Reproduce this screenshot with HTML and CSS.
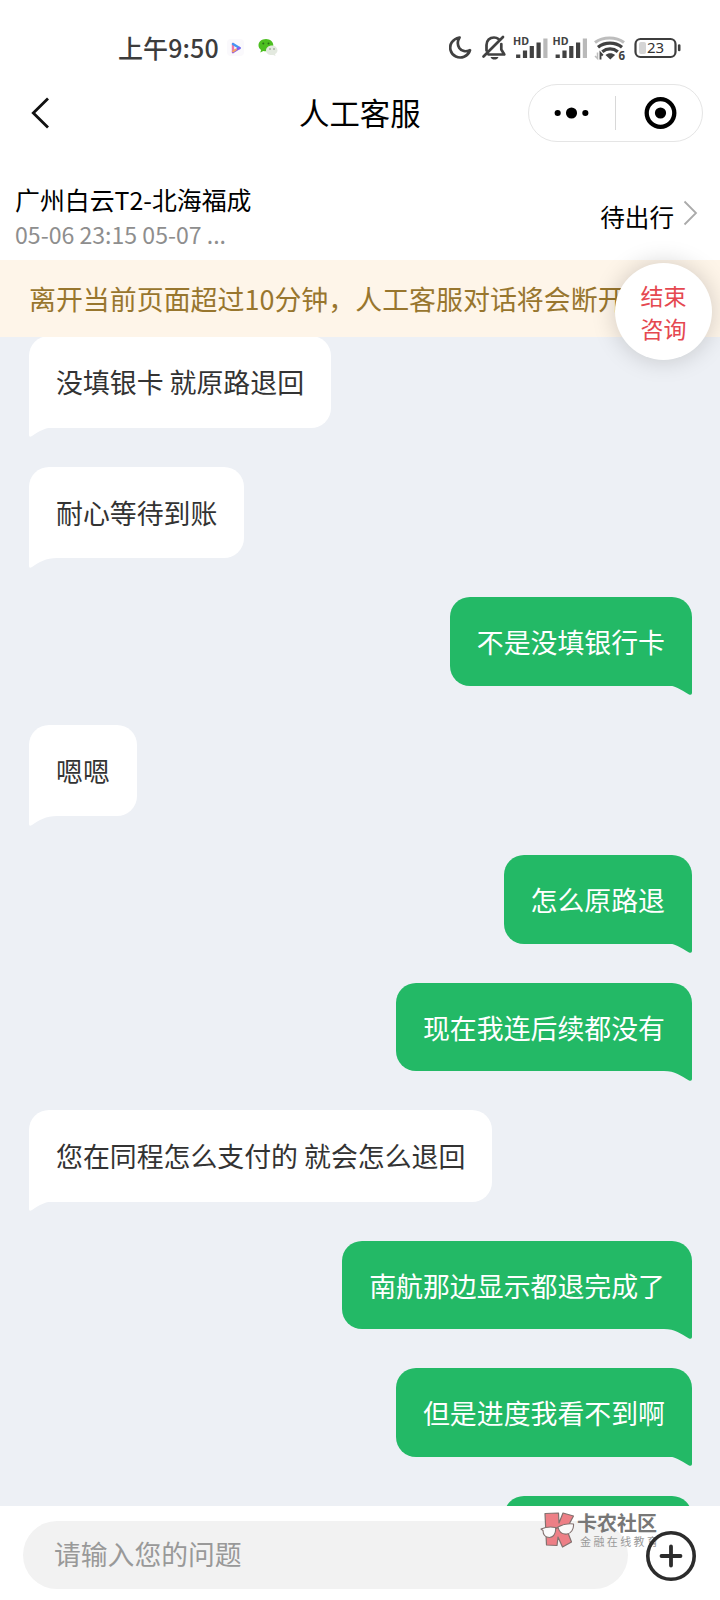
FILE: index.html
```html
<!DOCTYPE html>
<html lang="zh-CN">
<head>
<meta charset="utf-8">
<title>人工客服</title>
<link rel="stylesheet" href="styles.css">
</head>
<body>
<div class="app">
  <div class="status">
    <span class="clock">上午9:50</span>
    <svg class="apps" width="52" height="24" viewBox="0 0 52 24">
      <rect x="1" y="3" width="17" height="17" rx="4" fill="#faf9fc"/>
      <path d="M7 8v8" stroke="#ee79a8" stroke-width="2.400" stroke-linecap="round"/>
      <path d="M7 8l6.500 4" stroke="#4694f5" stroke-width="2.400" stroke-linecap="round"/>
      <path d="M7 16l6.500-4" stroke="#8a5bea" stroke-width="2.400" stroke-linecap="round"/>
      <path d="M7 15.500l3-2" stroke="#f8a45d" stroke-width="2" stroke-linecap="round"/>
      <g transform="translate(3 0)">
      <path d="M37 3c-4.400 0-7.500 2.800-7.500 6.200 0 2 1 3.700 2.600 4.800l-.8 2.500 3-1.500c4.900 1.200 10-1.400 10-5.800C44.300 5.800 41 3 37 3z" fill="#4cbf20"/>
      <circle cx="34.300" cy="7.600" r="1" fill="#286d16"/><circle cx="39.500" cy="7.600" r="1" fill="#286d16"/>
      <path d="M43 9.500c-3.400 0-6 2.200-6 4.900 0 3.200 3.600 5.400 7.300 4.500l2.200 1.200-.5-2c1.500-.9 2.500-2.200 2.500-3.700 0-2.700-2.400-4.900-5.500-4.900z" fill="#e3e9df"/>
      <circle cx="41" cy="13" r=".8" fill="#7d8a78"/><circle cx="45" cy="13" r=".8" fill="#7d8a78"/>
      </g>
    </svg>
    <svg class="signals" width="236" height="30" viewBox="0 0 236 30">
      <g fill="none" stroke="#414141" stroke-width="2.700" stroke-linecap="round" stroke-linejoin="round">
        <path d="M10.500 4.500C3.500 6 0 11.500 1.600 17.300 3.200 23 9.500 26 15 23.700c3-1.200 5.300-3.700 6-6.500-4.300 2-8.600 1-10.700-2.200-2-3.200-1.900-7 .2-10.500z"/>
        <path d="M37.500 17.500V12c0-4.600 3.200-7.500 7.500-7.500 1.800 0 3.300.5 4.500 1.500M52.300 11v5.500l3 5H39.500M54 4L34.500 23.500"/>
      </g>
      <path d="M41.500 24h8c-.8 1.800-2.200 2.600-4 2.600s-3.200-.8-4-2.600z" fill="#414141"/>
      <g id="sig">
        <g stroke="#414141" stroke-width="4.200"><path d="M69.200 25v-3.600M76 25v-7.500M82.800 25V13M89.600 25V9.500"/><path d="M96.400 25V5.500" stroke="#b9b9b9"/></g>
        <text x="64" y="12" class="hd" textLength="16" lengthAdjust="spacingAndGlyphs">HD</text>
      </g>
      <use href="#sig" x="39.500"/>
      <g fill="none" stroke="#414141" stroke-width="3.300">
        <path d="M146 9.500c8-6 21-6 29 0" stroke="#bdbdbd" stroke-width="3.200"/>
        <path d="M149 14.200c7-5.500 17-5.500 24 0M153.300 18.700c4.600-3.700 11-3.700 15.500 0"/>
      </g>
      <path d="M156.500 22c2.800-2.300 6.800-2.300 9.600 0l-4.800 4.500z" fill="#414141"/>
      <path d="M151.500 26.500v-6.500l2.300 2.500" fill="none" stroke="#414141" stroke-width="1.900"/>
      <path d="M148.500 19.500v6l-2.500-2.500" fill="none" stroke="#bdbdbd" stroke-width="1.500"/>
      <text x="169.500" y="26.500" class="six">6</text>
      <rect x="186.500" y="6" width="40" height="18" rx="5" fill="none" stroke="#3d3d3d" stroke-width="2.200"/>
      <rect x="190" y="9" width="7" height="12" rx="2" fill="#d5d5d5"/>
      <text x="206.500" y="20.300" class="charge">23</text>
      <path d="M230.200 12.500v4.500" stroke="#414141" stroke-width="2.600" stroke-linecap="round"/>
    </svg>
  </div>

  <div class="nav">
    <svg class="back" width="24" height="36" viewBox="0 0 24 36"><path d="M18 3.500L3.300 18 18 32.500" fill="none" stroke="#111" stroke-width="2.800"/></svg>
    <h1 class="title">人工客服</h1>
    <div class="capsule">
      <svg width="87" height="56" viewBox="0 0 87 56"><circle cx="29" cy="28" r="3.100"/><circle cx="43" cy="28" r="5.600"/><circle cx="57" cy="28" r="3.100"/></svg>
      <i class="divider"></i>
      <svg width="86" height="56" viewBox="0 0 86 56"><circle cx="44.500" cy="28" r="13.800" fill="none" stroke="#000" stroke-width="4.300"/><circle cx="44.500" cy="28" r="5.600"/></svg>
    </div>
  </div>

  <div class="trip">
    <div>
      <div class="route">广州白云T2-北海福成</div>
      <div class="date">05-06 23:15 05-07 ...</div>
    </div>
    <div class="state">待出行<svg width="16" height="28" viewBox="0 0 16 28"><path d="M2.500 2.500L14 14 2.500 25.500" fill="none" stroke="#aaa" stroke-width="1.800"/></svg></div>
  </div>

  <div class="notice">离开当前页面超过10分钟，人工客服对话将会断开
    <button class="end">结束<br>咨询</button>
  </div>

  <div class="chat">
    <div class="msg in">没填银卡 就原路退回<svg class="tail" viewBox="0 0 28 10"><path d="M0 0H28C17 0 10 4 3 9Q0 11 0 8z"/></svg></div>
    <div class="msg in">耐心等待到账<svg class="tail" viewBox="0 0 28 10"><path d="M0 0H28C17 0 10 4 3 9Q0 11 0 8z"/></svg></div>
    <div class="msg out">不是没填银行卡<svg class="tail" viewBox="0 0 28 10"><path d="M28 0H0C11 0 17 5 25 9.500Q28 10.500 28 8z"/></svg></div>
    <div class="msg in">嗯嗯<svg class="tail" viewBox="0 0 28 10"><path d="M0 0H28C17 0 10 4 3 9Q0 11 0 8z"/></svg></div>
    <div class="msg out">怎么原路退<svg class="tail" viewBox="0 0 28 10"><path d="M28 0H0C11 0 17 5 25 9.500Q28 10.500 28 8z"/></svg></div>
    <div class="msg out">现在我连后续都没有<svg class="tail" viewBox="0 0 28 10"><path d="M28 0H0C11 0 17 5 25 9.500Q28 10.500 28 8z"/></svg></div>
    <div class="msg in">您在同程怎么支付的 就会怎么退回<svg class="tail" viewBox="0 0 28 10"><path d="M0 0H28C17 0 10 4 3 9Q0 11 0 8z"/></svg></div>
    <div class="msg out">南航那边显示都退完成了<svg class="tail" viewBox="0 0 28 10"><path d="M28 0H0C11 0 17 5 25 9.500Q28 10.500 28 8z"/></svg></div>
    <div class="msg out">但是进度我看不到啊<svg class="tail" viewBox="0 0 28 10"><path d="M28 0H0C11 0 17 5 25 9.500Q28 10.500 28 8z"/></svg></div>
    <div class="msg out next"></div>
  </div>

  <div class="composer">
    <div class="field">请输入您的问题</div>
    <div class="watermark">
      <svg width="36" height="38" viewBox="0 0 36 38">
        <path d="M5 2.500L18.500 2 19 12 23 2 33.500 5 26.500 18 31.500 31 22.500 36 18 26 17 34.500 6.500 34z" fill="#ed7f86" stroke="#83716f" stroke-width="1.200" stroke-linejoin="round"/>
        <path d="M1 18q7-3 14.500-1.500c.8 5.500-2 10-6 10-4.500 0-6.500-3-6.500-7zM18 16q7-4 15.500-3c.5 5-2.500 9.500-6.500 10-4.500.5-8-2-9-7z" fill="#fafafa" stroke="#83716f" stroke-width="1.100" stroke-linejoin="round"/>
        <path d="M15.500 17.500l2.500-1" stroke="#83716f" stroke-width="1.400"/>
      </svg>
      <div><div class="wm-name">卡农社区</div><div class="wm-sub">金融在线教育</div></div>
    </div>
    <svg class="plus" width="52" height="52" viewBox="0 0 52 52"><circle cx="26" cy="26" r="23.200" fill="none" stroke="#2c2c2c" stroke-width="3.600"/><path d="M26 16.500v19M16.500 26h19" stroke="#2c2c2c" stroke-width="3.800" stroke-linecap="round"/></svg>
  </div>
</div>
</body>
</html>
```
FILE: styles.css
```css
* { box-sizing: border-box; }
body { margin: 0; background: #fff; font-family: "Noto Sans CJK SC", sans-serif; color: #000; }
svg { display: block; flex: none; }
.app { width: 720px; height: 1600px; display: flex; flex-direction: column; overflow: hidden; }
.status { height: 84px; display: flex; align-items: flex-start; padding: 32px 35px 0 118px; color: #3c3c3c; }
.clock { font-size: 25px; line-height: 30px; font-weight: 500; width: 108px; white-space: nowrap; letter-spacing: .1px; }
.apps { margin-top: 4px; }
.signals { margin: 1px 0 0 auto; }
.hd { font: 700 10.5px "Noto Sans", sans-serif; fill: #414141; }
.six { font: 700 11.5px "Noto Sans", sans-serif; fill: #414141; }
.charge { font: 15px "Noto Sans", sans-serif; fill: #333; text-anchor: middle; }
.nav { height: 58px; display: grid; grid-template-columns: 192px 1fr 175px; align-items: center; padding: 0 17px 0 30px; }
.title { margin: -3px 0 0 77px; font-size: 30.4px; line-height: 44px; font-weight: 400; }
.capsule { height: 58px; border: 1px solid #e5e5e5; border-radius: 29px; display: flex; align-items: center; }
.divider { width: 1px; height: 34px; background: #d8d8d8; flex: none; }
.capsule svg { flex: 0 0 86px; }
.trip { height: 118px; padding: 39px 22px 0 15px; display: flex; justify-content: space-between; }
.route { font-size: 24.9px; line-height: 36px; }
.date { font-size: 23.1px; line-height: 34px; color: #8e8e8e; }
.state { display: flex; height: 70px; align-items: center; gap: 8px; font-size: 24.6px; line-height: 36px; }
.state svg { margin-top: -6px; }
.notice { position: relative; height: 76.5px; background: #fef5e9; color: #98762e; padding: 0 29px; font-size: 26.95px; line-height: 78px; white-space: nowrap; }
.end { position: absolute; left: 615px; top: 3px; width: 97px; height: 97px; border: 0; border-radius: 50%; background: #fff; color: #e54850; font: 23px/33px "Noto Sans CJK SC", sans-serif; padding: 1px 0 0; box-shadow: 0 0 24px rgba(0, 0, 0, .18); z-index: 2; }
.chat { height: 1169px; background: #edf0f5; padding: 0 28px 0 29px; display: flex; flex-direction: column; gap: 39px; overflow: hidden; }
.msg { position: relative; flex: none; padding: 0 27px; font-size: 26.9px; border-radius: 20px; white-space: nowrap; }
.msg:first-child { margin-top: -.5px; }
.in { align-self: flex-start; height: 91.5px; line-height: 91px; background: #fff; color: #333; border-bottom-left-radius: 0; }
.out { align-self: flex-end; height: 88.5px; line-height: 89px; background: #23b966; color: #fff; border-bottom-right-radius: 0; }
.next { width: 188px; }
.tail { position: absolute; top: calc(100% - .5px); width: 28px; height: 10px; }
.in .tail { left: 0; fill: #fff; }
.out .tail { right: 0; fill: #23b966; }
.composer { position: relative; height: 94.5px; padding: 15.5px 23px 0; display: flex; gap: 17px; background: #fff; }
.field { width: 605px; height: 68px; border-radius: 34px; background: #f2f2f2; color: #999; padding-left: 31px; font-size: 26.8px; line-height: 66px; }
.plus { margin-top: 8.5px; position: relative; }
.watermark { position: absolute; left: 540px; top: 5px; display: flex; color: #777; white-space: nowrap; }
.wm-name { font-size: 20px; line-height: 24px; font-weight: 700; margin-left: 1px; }
.wm-sub { font-size: 11px; line-height: 13px; letter-spacing: 2.4px; margin-left: 4px; color: #999; }
```
